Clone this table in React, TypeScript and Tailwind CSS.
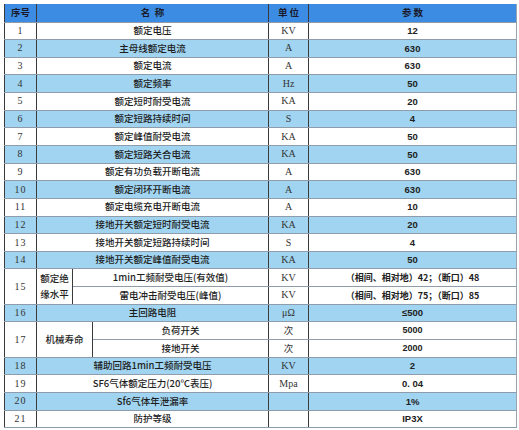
const cjk = "font-['Noto_Sans_CJK_SC',sans-serif]"
const serif = "font-['Liberation_Serif','Noto_Sans_CJK_SC',serif]"
const num = "font-['Liberation_Sans','Noto_Sans_CJK_SC',sans-serif] font-bold"

type Row = [string, string, string, string]

const top: Row[] = [
  ['1', '额定电压', 'KV', '12'],
  ['2', '主母线额定电流', 'A', '630'],
  ['3', '额定电流', 'A', '630'],
  ['4', '额定频率', 'Hz', '50'],
  ['5', '额定短时耐受电流', 'KA', '20'],
  ['6', '额定短路持续时间', 'S', '4'],
  ['7', '额定峰值耐受电流', 'KA', '50'],
  ['8', '额定短路关合电流', 'KA', '50'],
  ['9', '额定有功负载开断电流', 'A', '630'],
  ['10', '额定闭环开断电流', 'A', '630'],
  ['11', '额定电缆充电开断电流', 'A', '10'],
  ['12', '接地开关额定短时耐受电流', 'KA', '20'],
  ['13', '接地开关额定短路持续时间', 'S', '4'],
  ['14', '接地开关额定峰值耐受电流', 'KA', '50'],
]

const bottom: Row[] = [
  ['18', '辅助回路1min工频耐受电压', 'KV', '2'],
  ['19', 'SF6气体额定压力(20℃表压)', 'Mpa', '0. 04'],
  ['20', 'Sf6气体年泄漏率', '', '1%'],
  ['21', '防护等级', '', 'IP3X'],
]

const td = 'p-0 text-center align-middle leading-none border-b border-b-[#8f9cab] border-r border-r-[#3a3a3a]'
const name = `${cjk} text-[9.5px] font-medium text-[#1e1e1e]`
const blue = 'bg-[#a0d4f0]'

function Plain({ r }: { r: Row }) {
  const band = Number(r[0]) % 2 === 0 ? blue : 'bg-white'
  return (
    <tr className={`h-[17.65px] ${band}`}>
      <td className={`${td} ${serif} text-[10px] tracking-[1px] text-[#333]`}>{r[0]}</td>
      <td colSpan={3} className={`${td} ${name}`}>{r[1]}</td>
      <td className={`${td} ${serif} text-[10px] text-[#333]`}>{r[2]}</td>
      <td className={`${td} ${num} text-[9.5px] text-[#222] border-r-0`}>{r[3]}</td>
    </tr>
  )
}

export default function App() {
  return (
    <div className="w-[519px] h-[430px] bg-white pt-[4px] pl-[4px]">
      <table className="table-fixed border-collapse w-[512px] border-l border-l-[#3a3a3a] border-r border-r-[#9aa5b0]">
        <colgroup>
          <col className="w-[32px]" />
          <col className="w-[36px]" />
          <col className="w-[20px]" />
          <col className="w-[176px]" />
          <col className="w-[40px]" />
          <col className="w-[208px]" />
        </colgroup>
        <tbody>
          <tr className="h-[18px] bg-[#3b8ce2]">
            <td className={`${td} ${cjk} text-[9.5px] font-bold text-[#1a1a2a]`}>序号</td>
            <td colSpan={3} className={`${td} ${cjk} text-[9.5px] font-bold text-[#1a1a2a] whitespace-pre`}>名  称</td>
            <td className={`${td} ${cjk} text-[9.5px] font-bold text-[#1a1a2a]`}>单 位</td>
            <td className={`${td} ${cjk} text-[9.5px] font-bold text-[#1a1a2a] border-r-0`}>参 数</td>
          </tr>
          {top.map((r) => (
            <Plain key={r[0]} r={r} />
          ))}
          <tr className="h-[17.65px] bg-white">
            <td rowSpan={2} className={`${td} ${serif} text-[10px] tracking-[1px] text-[#333]`}>15</td>
            <td rowSpan={2} className={`${td} ${name}`}>
              <div className="flex flex-col gap-[7px]">
                <span>额定绝</span>
                <span>缘水平</span>
              </div>
            </td>
            <td colSpan={2} className={`${td} ${name}`}>1min工频耐受电压(有效值)</td>
            <td className={`${td} ${serif} text-[10px] text-[#333]`}>KV</td>
            <td className={`${td} ${cjk} text-[9px] font-bold text-[#222] border-r-0`}>（相间、相对地）42；（断口）48</td>
          </tr>
          <tr className="h-[17.65px] bg-white">
            <td colSpan={2} className={`${td} ${name}`}>雷电冲击耐受电压(峰值)</td>
            <td className={`${td} ${serif} text-[10px] text-[#333]`}>KV</td>
            <td className={`${td} ${cjk} text-[9px] font-bold text-[#222] border-r-0`}>（相间、相对地）75；（断口）85</td>
          </tr>
          <Plain r={['16', '主回路电阻', 'μΩ', '≤500']} />
          <tr className="h-[17.65px] bg-white">
            <td rowSpan={2} className={`${td} ${serif} text-[10px] tracking-[1px] text-[#333]`}>17</td>
            <td rowSpan={2} colSpan={2} className={`${td} ${name}`}>机械寿命</td>
            <td className={`${td} ${name}`}>负荷开关</td>
            <td className={`${td} ${cjk} text-[9.5px] text-[#333]`}>次</td>
            <td className={`${td} ${num} text-[9px] text-[#222] border-r-0`}>5000</td>
          </tr>
          <tr className="h-[17.65px] bg-white">
            <td className={`${td} ${name}`}>接地开关</td>
            <td className={`${td} ${cjk} text-[9.5px] text-[#333]`}>次</td>
            <td className={`${td} ${num} text-[9px] text-[#222] border-r-0`}>2000</td>
          </tr>
          {bottom.map((r) => (
            <Plain key={r[0]} r={r} />
          ))}
        </tbody>
      </table>
    </div>
  )
}
